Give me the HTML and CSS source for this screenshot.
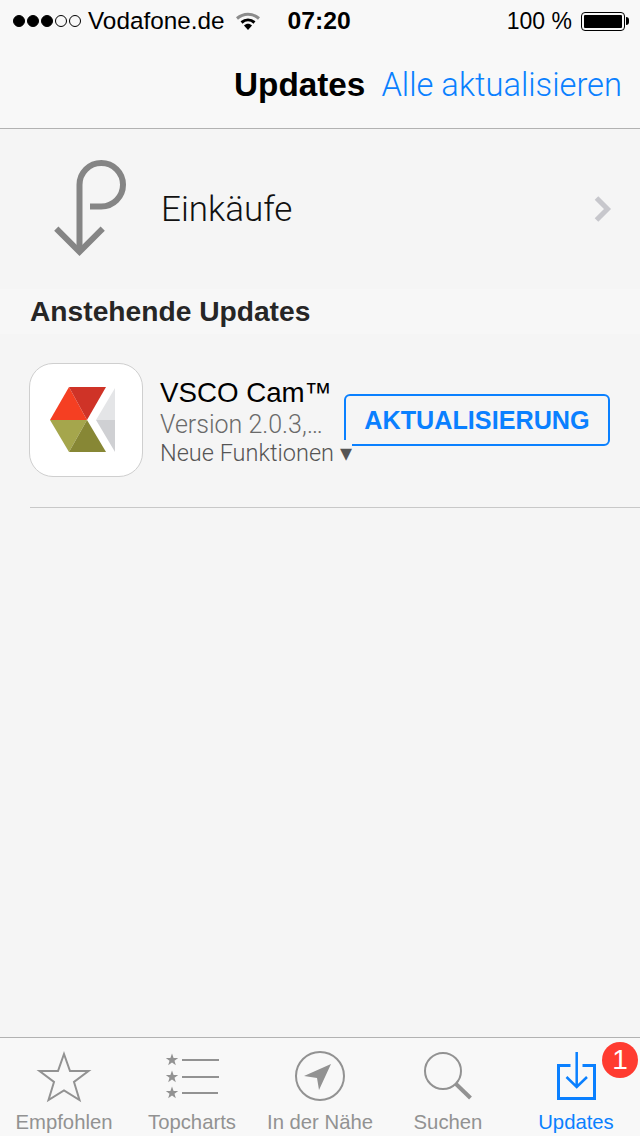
FILE: index.html
```html
<!DOCTYPE html>
<html lang="de">

<head>
    <meta charset="UTF-8" />
    <meta name="viewport" content="width=device-width, initial-scale=1.0" />
    <title>Updates</title>
    <link rel="stylesheet" href="styles.css">
</head>

<body>
    <div class="screen">
        <div class="top-bar">
            <div class="status-bar">
                <div class="signal">
                    <span class="dot on"></span><span class="dot on"></span><span class="dot on"></span><span class="dot"></span><span class="dot"></span>
                </div>
                <span class="carrier">Vodafone.de</span>
                <svg class="wifi" width="26" height="20" viewBox="0 0 26 20">
                    <path d="M2 7.5C8.500 1.800 17.500 1.800 24 7.500" fill="none" stroke="#8c8c8c" stroke-width="3" />
                    <path d="M6.500 11.500C10.500 8.200 15.500 8.200 19.500 11.500" fill="none" stroke="#000" stroke-width="3" />
                    <path d="M9 14.500C11.500 12.300 14.500 12.300 17 14.500L13 19Z" fill="#000" />
                </svg>
                <span class="time">07:20</span>
                <span class="battery-text">100 %</span>
                <div class="battery"><div class="battery-fill"></div></div>
            </div>
            <div class="nav-bar">
                <span class="nav-title">Updates</span>
                <span class="nav-action">Alle aktualisieren</span>
            </div>
        </div>

        <div class="purchases">
            <svg class="purchases-icon" width="80" height="100" viewBox="0 0 80 100">
                <path d="M29.500 92V25.750A21.750 21.750 0 0 1 73 25.750A21.750 21.750 0 0 1 51.250 47.500H40" fill="none" stroke="#858585" stroke-width="6" />
                <path d="M6.300 69.700L29.500 92.800L52.700 69.700" fill="none" stroke="#858585" stroke-width="6" />
            </svg>
            <span class="purchases-label">Einkäufe</span>
            <svg class="chevron" width="18" height="26" viewBox="0 0 18 26">
                <path d="M2.500 2L13.500 13L2.500 24" fill="none" stroke="#c7c7cc" stroke-width="5" />
            </svg>
        </div>

        <div class="section-title">Anstehende Updates</div>

        <div class="app-row">
            <div class="app-icon">
                <svg width="66" height="66" viewBox="0 0 66 66">
                    <path d="M19 0L37 33L0 33Z" fill="#f53f22" />
                    <path d="M19 0H56L37 33Z" fill="#cf3327" />
                    <path d="M0 33H37L19 65Z" fill="#a5a64c" />
                    <path d="M37 33L56 65H19Z" fill="#878735" />
                    <path d="M65 1V33H46Z" fill="#e4e5e7" />
                    <path d="M46 33H65V65Z" fill="#cfd0d3" />
                </svg>
            </div>
            <div class="app-info">
                <div class="app-name">VSCO Cam™</div>
                <div class="app-version">Version 2.0.3,…</div>
                <div class="app-news">Neue Funktionen ▾</div>
            </div>
            <button class="update-button">AKTUALISIERUNG</button>
        </div>
        <div class="row-line"></div>

        <div class="spacer"></div>

        <div class="tab-bar">
            <div class="tab">
                <svg width="56" height="52" viewBox="0 0 56 52">
                    <path d="M28 3L34 20H52.500L38 31L43.500 49L28 39.500L12.500 49L18 31L3.500 20H22Z" fill="none" stroke="#929292" stroke-width="2" />
                </svg>
                <span class="tab-label">Empfohlen</span>
            </div>
            <div class="tab">
                <svg width="56" height="52" viewBox="0 0 56 52">
                    <defs>
                        <path id="chart-star" d="M0 -6.500L1.600 -2H6.200L2.500 .8L3.800 5.300L0 2.600L-3.800 5.300L-2.500 .8L-6.200 -2H-1.600Z" fill="#929292" />
                    </defs>
                    <use href="#chart-star" x="8" y="9" />
                    <use href="#chart-star" x="8" y="26" />
                    <use href="#chart-star" x="8" y="42" />
                    <path d="M18 9H55M18 26H55M18 42H54" stroke="#929292" stroke-width="2" />
                </svg>
                <span class="tab-label">Topcharts</span>
            </div>
            <div class="tab">
                <svg width="52" height="52" viewBox="0 0 52 52">
                    <circle cx="26" cy="25" r="24" fill="none" stroke="#929292" stroke-width="2" />
                    <path d="M37 13L10 25L23 27L25 39Z" fill="#929292" />
                </svg>
                <span class="tab-label">In der Nähe</span>
            </div>
            <div class="tab">
                <svg width="52" height="52" viewBox="0 0 52 52">
                    <circle cx="21" cy="20" r="18" fill="none" stroke="#929292" stroke-width="2" />
                    <path d="M34 33L48.500 47" stroke="#929292" stroke-width="4" />
                </svg>
                <span class="tab-label">Suchen</span>
            </div>
            <div class="tab active">
                <svg width="42" height="52" viewBox="0 0 42 52">
                    <path d="M15.500 14.500H3.500V47.500H39.500V14.500H27.500" fill="none" stroke="#0a80ff" stroke-width="3" />
                    <path d="M21.700 1V36M11.500 26L21.700 36L32 26" fill="none" stroke="#0a80ff" stroke-width="2.500" />
                </svg>
                <span class="tab-label">Updates</span>
                <span class="badge">1</span>
            </div>
        </div>
    </div>
</body>

</html>
```

FILE: styles.css
```css
body,
html {
    margin: 0;
    padding: 0;
    font-family: "Liberation Sans", Arial, sans-serif;
    background-color: #f5f5f5;
}

.screen {
    width: 640px;
    height: 1136px;
    display: flex;
    flex-direction: column;
    overflow: hidden;
}

.top-bar {
    height: 128px;
    background-color: #f8f8f8;
    border-bottom: 1px solid #b2b2b2;
}

.status-bar {
    height: 42px;
    display: flex;
    align-items: center;
    color: #000;
    font-size: 24.3px;
}

.signal {
    display: flex;
    gap: 2px;
    margin-left: 13px;
}

.dot {
    width: 12px;
    height: 12px;
    border: 1px solid #000;
    border-radius: 50%;
    box-sizing: border-box;
}

.dot.on {
    background-color: #000;
}

.carrier {
    margin-left: 7px;
}

.wifi {
    margin-left: 11px;
}

.time {
    margin-left: 26px;
    font-size: 24.7px;
    font-weight: bold;
}

.battery-text {
    margin-left: auto;
    font-size: 23px;
}

.battery {
    width: 44px;
    height: 19px;
    margin: 0 15px 0 9px;
    padding: 2px;
    box-sizing: border-box;
    border: 1px solid #000;
    border-radius: 4px;
    position: relative;
}

.battery::after {
    content: "";
    position: absolute;
    right: -5px;
    top: 4px;
    width: 3px;
    height: 8px;
    background-color: #000;
    border-radius: 0 3px 3px 0;
}

.battery-fill {
    height: 100%;
    background-color: #000;
    border-radius: 1px;
}

.nav-bar {
    display: flex;
    justify-content: flex-end;
    align-items: center;
    gap: 16px;
    height: 86px;
    padding-right: 18px;
}

.nav-title {
    font-size: 33.3px;
    font-weight: bold;
    color: #000;
}

.nav-action {
    font-family: Roboto, "Liberation Sans", sans-serif;
    font-size: 32.7px;
    font-weight: 300;
    color: #0a80ff;
}

.purchases {
    height: 160px;
    display: flex;
    align-items: center;
    background-color: #f5f5f5;
}

.purchases-icon {
    margin-left: 50px;
}

.purchases-label {
    margin-left: 31px;
    font-family: Roboto, "Liberation Sans", sans-serif;
    font-size: 35px;
    font-weight: 300;
    color: #111;
}

.chevron {
    margin-left: auto;
    margin-right: 28px;
}

.section-title {
    height: 45px;
    line-height: 45px;
    padding-left: 30px;
    background-color: #f7f7f7;
    font-size: 28.2px;
    font-weight: bold;
    color: #262626;
}

.app-row {
    height: 173px;
    display: flex;
    align-items: center;
    padding: 0 0 1px 29px;
    box-sizing: border-box;
}

.app-icon {
    width: 114px;
    height: 114px;
    padding-right: 7px;
    box-sizing: border-box;
    display: flex;
    align-items: center;
    justify-content: center;
    background-color: #fff;
    border: 1px solid #cfcfcf;
    border-radius: 24px;
}

.app-info {
    width: 184px;
    margin-left: 17px;
}

.app-name {
    font-size: 27.7px;
    line-height: 32px;
    margin-top: 2px;
    color: #000;
}

.app-version {
    font-family: Roboto, "Liberation Sans", sans-serif;
    font-size: 25px;
    font-weight: 300;
    line-height: 30px;
    margin-top: 1px;
    color: #6a6a6a;
}

.app-news {
    position: relative;
    z-index: 1;
    width: max-content;
    font-family: Roboto, "Liberation Sans", sans-serif;
    font-size: 23.5px;
    font-weight: 300;
    line-height: 26px;
    white-space: nowrap;
    background-color: #f5f5f5;
    color: #555;
}

.update-button {
    width: 266px;
    height: 52px;
    padding: 0;
    background-color: transparent;
    border: 2px solid #0a80ff;
    border-radius: 6px;
    color: #0a80ff;
    font-family: inherit;
    font-size: 25.2px;
    font-weight: bold;
}

.row-line {
    height: 1px;
    margin-left: 30px;
    background-color: #c8c8c8;
}

.spacer {
    flex-grow: 1;
}

.tab-bar {
    height: 98px;
    display: flex;
    background-color: #f8f8f8;
    border-top: 1px solid #b2b2b2;
}

.tab {
    position: relative;
    width: 128px;
    display: flex;
    flex-direction: column;
    align-items: center;
    padding-top: 13px;
    box-sizing: border-box;
    color: #929292;
}

.tab-label {
    font-size: 20.3px;
    line-height: 24px;
    margin-top: 7px;
    white-space: nowrap;
}

.tab.active {
    color: #0a80ff;
}

.badge {
    position: absolute;
    top: 4px;
    left: 90px;
    width: 36px;
    height: 36px;
    line-height: 36px;
    border-radius: 50%;
    text-align: center;
    background-color: #ff3b30;
    color: #fff;
    font-size: 28px;
}
```
